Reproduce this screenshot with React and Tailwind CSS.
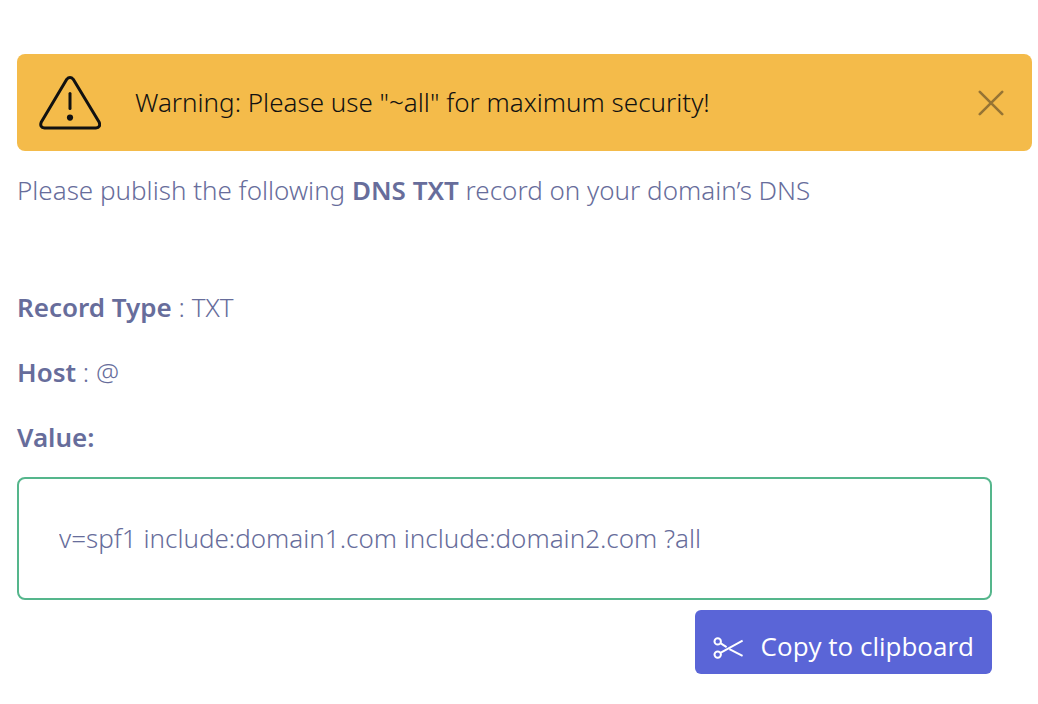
import React, { useState } from "react";

const SPF_RECORD = "v=spf1 include:domain1.com include:domain2.com ?all";

function WarningIcon() {
    return (
        <svg className="h-[54px] w-[62px] shrink-0" viewBox="0 0 62 54" fill="none" stroke="currentColor" strokeLinecap="round" strokeLinejoin="round" aria-hidden="true">
            <path d="M27.6 3.4 2.2 46.2Q.4 51.4 5.6 52H56.8Q62 51.4 60.2 46.2L34.4 3.4Q31 -.4 27.6 3.4Z" strokeWidth="3" />
            <path d="M31 17.5V32.5" strokeWidth="3" />
            <circle cx="31" cy="41.6" r="3.1" fill="currentColor" stroke="none" />
        </svg>
    );
}

function CloseIcon() {
    return (
        <svg className="size-[26px]" viewBox="0 0 26 26" fill="none" stroke="currentColor" strokeWidth="2.6" strokeLinecap="round" aria-hidden="true">
            <path d="M1.8 1.8 24.2 24.2M24.2 1.8 1.8 24.2" />
        </svg>
    );
}

function ScissorsIcon() {
    return (
        <svg className="mt-1 h-[22px] w-[30px] shrink-0" viewBox="0 0 30 22" fill="none" stroke="currentColor" strokeWidth="2" aria-hidden="true">
            <circle cx="4.7" cy="4.4" r="3.2" />
            <circle cx="4.7" cy="17.6" r="3.2" />
            <path d="M7.4 6.2 13.6 10.2M7.4 15.8 29.6 3.6" />
            <path d="M16.4 12.2 29.6 18.8" />
        </svg>
    );
}

export default function App() {
    const [showWarning, setShowWarning] = useState(true);

    const copyRecord = () => {
        navigator.clipboard?.writeText(SPF_RECORD);
    };

    return (
        <main className="bg-white pt-[54px] pr-[6px] pb-[30px] pl-[17px] font-['Noto_Sans','Open_Sans',sans-serif] text-[26px] leading-[39px] font-light text-[#676d9b]">
            {showWarning && (
                <div role="alert" className="flex items-center rounded-lg bg-[#f4bb4a] py-5 pr-7 pl-[22px] text-[#111]">
                    <WarningIcon />
                    <p className="ml-[34px] flex-1 py-[9px]">Warning: Please use "~all" for maximum security!</p>
                    <button type="button" aria-label="Close" onClick={() => setShowWarning(false)} className="text-[#967434]">
                        <CloseIcon />
                    </button>
                </div>
            )}

            <p className="mt-5">
                Please publish the following <strong className="font-semibold">DNS TXT</strong> record on your domain’s DNS
            </p>

            <div className="mt-[78px] mr-10">
                <p>
                    <strong className="font-semibold">Record Type</strong> : TXT
                </p>
                <p className="mt-[26px]">
                    <strong className="font-semibold">Host</strong> : @
                </p>
                <label htmlFor="spf-value" className="mt-[26px] block font-semibold">Value:</label>
                <input
                    id="spf-value"
                    readOnly
                    value={SPF_RECORD}
                    className="mt-5 block w-full rounded-lg border-2 border-[#55b68c] bg-white px-10 py-10 outline-none"
                />
                <div className="mt-[10px] flex justify-end">
                    <button type="button" onClick={copyRecord} className="flex h-16 items-center gap-[18px] rounded-md bg-[#5a65d7] px-[18px] pt-2 font-['Open_Sans',sans-serif] font-normal text-white">
                        <ScissorsIcon />
                        Copy to clipboard
                    </button>
                </div>
            </div>
        </main>
    );
}
